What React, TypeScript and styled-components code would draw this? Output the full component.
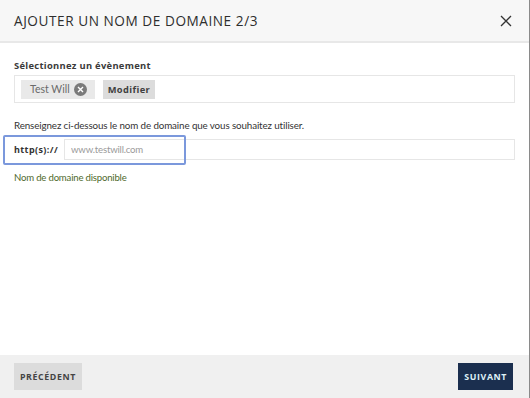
import React from "react";
import styled, { createGlobalStyle } from "styled-components";

const Global = createGlobalStyle`
  html, body { margin: 0; padding: 0; background: #ffffff; }
  body { font-family: Lato, "Open Sans", sans-serif; }
  * { box-sizing: border-box; }
`;

const Modal = styled.div`
  width: 530px;
  height: 398px;
  display: flex;
  flex-direction: column;
  background: #fff;
  border-right: 1px solid #8a8a8a;
  position: relative;
`;

const Header = styled.div`
  height: 43px;
  flex: none;
  background: #f7f7f7;
  border-bottom: 2px solid #e8e8e8;
  display: flex;
  align-items: center;
  justify-content: space-between;
  padding: 0 16px 0 14px;
`;

const Title = styled.h1`
  margin: 0;
  font-family: "Open Sans", sans-serif;
  font-weight: 500;
  font-size: 13.6px;
  letter-spacing: 0.56px;
  color: #2e2e2e;
`;

const CloseBtn = styled.button`
  border: none;
  background: none;
  padding: 0;
  width: 14px;
  height: 14px;
  display: flex;
  align-items: center;
  justify-content: center;
  cursor: pointer;
`;

const Body = styled.div`
  flex: 1;
  padding: 16px 14px 0 14px;
  display: flex;
  flex-direction: column;
  position: relative;
`;

const Label = styled.div`
  font-family: "Open Sans", sans-serif;
  font-weight: 700;
  font-size: 9.4px;
  letter-spacing: 0.3px;
  color: #3a3a3a;
  line-height: 14px;
  margin-bottom: 2px;
`;

const EventBox = styled.div`
  height: 28px;
  border: 1px solid #e6e6e6;
  display: flex;
  align-items: center;
  gap: 8px;
  padding: 0 6px;
`;

const Chip = styled.div`
  height: 19px;
  background: #e9e9e9;
  display: flex;
  align-items: center;
  gap: 4px;
  padding: 0 8px 0 9px;
  font-family: Lato, sans-serif;
  font-size: 10.5px;
  color: #6a6a6a;
`;

const ChipClose = styled.span`
  width: 13px;
  height: 13px;
  border-radius: 50%;
  background: #7a7a7a;
  display: inline-flex;
  align-items: center;
  justify-content: center;
`;

const SmallButton = styled.button`
  height: 19px;
  border: none;
  background: #dcdcdc;
  padding: 0 5px;
  font-family: "Open Sans", sans-serif;
  font-weight: 700;
  font-size: 9.3px;
  letter-spacing: 0.4px;
  color: #3f3f3f;
`;

const Help = styled.p`
  margin: 15px 0 0 0;
  font-family: Lato, sans-serif;
  font-size: 9.8px;
  letter-spacing: -0.12px;
  color: #333;
  line-height: 14px;
`;

const InputRow = styled.div`
  margin-top: 7px;
  height: 21px;
  display: flex;
  align-items: stretch;
  position: relative;
`;

const Prefix = styled.div`
  width: 50px;
  display: flex;
  align-items: center;
  font-family: "Open Sans", sans-serif;
  font-weight: 700;
  font-size: 9px;
  letter-spacing: 0.4px;
  color: #333;
`;

const Input = styled.input`
  flex: 1;
  border: 1px solid #e6e6e6;
  padding: 0 6px;
  font-family: Lato, sans-serif;
  font-size: 9.6px;
  letter-spacing: -0.2px;
  color: #333;
  outline: none;
  &::placeholder { color: #9a9a9a; }
`;

const Focus = styled.div`
  position: absolute;
  left: -11px;
  top: -4px;
  width: 183px;
  height: 30px;
  border: 2px solid #7b98dc;
  border-radius: 2px;
  pointer-events: none;
`;

const Status = styled.div`
  margin-top: 11px;
  font-family: Lato, sans-serif;
  font-size: 9.6px;
  letter-spacing: -0.2px;
  color: #4f6a2c;
  line-height: 14px;
`;

const Footer = styled.div`
  height: 43px;
  flex: none;
  background: #f0f0f0;
  display: flex;
  align-items: center;
  justify-content: space-between;
  padding: 0 16px 0 14px;
`;

const FooterButton = styled.button<{ $primary?: boolean }>`
  height: 27px;
  border: none;
  padding: 0 6px;
  background: ${(p) => (p.$primary ? "#1b2f4f" : "#dcdcdc")};
  color: ${(p) => (p.$primary ? "#dff2f7" : "#444")};
  font-family: "Open Sans", sans-serif;
  font-weight: 700;
  font-size: 8.8px;
  letter-spacing: 0.6px;
  text-transform: uppercase;
`;

export default function App() {
  return (
    <>
      <Global />
      <Modal>
        <Header>
          <Title>AJOUTER UN NOM DE DOMAINE 2/3</Title>
          <CloseBtn aria-label="Fermer">
            <svg width="12" height="12" viewBox="0 0 12 12">
              <path d="M1 1 L11 11 M11 1 L1 11" stroke="#333" strokeWidth="1.3" />
            </svg>
          </CloseBtn>
        </Header>
        <Body>
          <Label>Sélectionnez un évènement</Label>
          <EventBox>
            <Chip>
              Test Will
              <ChipClose>
                <svg width="7" height="7" viewBox="0 0 7 7">
                  <path d="M1 1 L6 6 M6 1 L1 6" stroke="#fff" strokeWidth="1.4" />
                </svg>
              </ChipClose>
            </Chip>
            <SmallButton>Modifier</SmallButton>
          </EventBox>
          <Help>Renseignez ci-dessous le nom de domaine que vous souhaitez utiliser.</Help>
          <InputRow>
            <Prefix>http(s)://</Prefix>
            <Input placeholder="www.testwill.com" />
            <Focus />
          </InputRow>
          <Status>Nom de domaine disponible</Status>
        </Body>
        <Footer>
          <FooterButton>Précédent</FooterButton>
          <FooterButton $primary>Suivant</FooterButton>
        </Footer>
      </Modal>
    </>
  );
}
